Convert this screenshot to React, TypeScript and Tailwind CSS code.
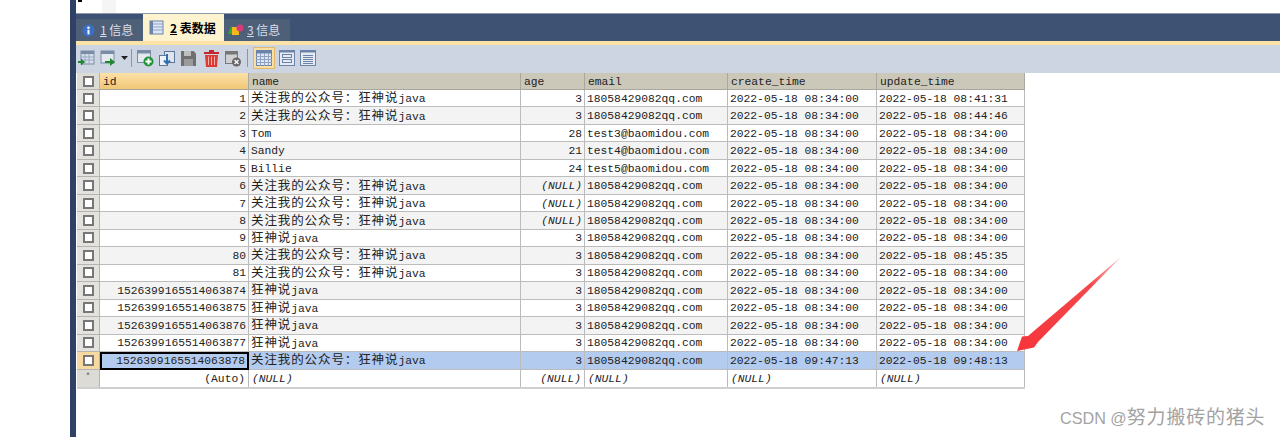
const dt = '18058429082qq.com';
const t0 = '2022-05-18 08:34:00';
const gz = '关注我的公众号：狂神说java';
const ks = '狂神说java';

const rows = [
  ['1', gz, '3', dt, t0, '2022-05-18 08:41:31'],
  ['2', gz, '3', dt, t0, '2022-05-18 08:44:46'],
  ['3', 'Tom', '28', 'test3@baomidou.com', t0, t0],
  ['4', 'Sandy', '21', 'test4@baomidou.com', t0, t0],
  ['5', 'Billie', '24', 'test5@baomidou.com', t0, t0],
  ['6', gz, '(NULL)', dt, t0, t0],
  ['7', gz, '(NULL)', dt, t0, t0],
  ['8', gz, '(NULL)', dt, t0, t0],
  ['9', ks, '3', dt, t0, t0],
  ['80', gz, '3', dt, t0, '2022-05-18 08:45:35'],
  ['81', gz, '3', dt, t0, t0],
  ['1526399165514063874', ks, '3', dt, t0, t0],
  ['1526399165514063875', ks, '3', dt, t0, t0],
  ['1526399165514063876', ks, '3', dt, t0, t0],
  ['1526399165514063877', ks, '3', dt, t0, t0],
  ['1526399165514063878', gz, '3', dt, '2022-05-18 09:47:13', '2022-05-18 09:48:13'],
];

const widths = ['w-[149px]', 'w-[272px]', 'w-[64px]', 'w-[143px]', 'w-[149px]', 'w-[148px]'];
const headers = ['id', 'name', 'age', 'email', 'create_time', 'update_time'];

// CJK runs are set a little larger than the mono text, as in the grid's fallback font
function CellText({ text }: { text: string }) {
  const parts = text.split(/([^\x00-\x7f]+)/);
  return (
    <span className="leading-[13px]">
      {parts.map((p, i) =>
        /[^\x00-\x7f]/.test(p) ? (
          <span key={i} className="text-[12.5px] leading-[13px] tracking-[0.9px] font-['Noto_Sans_CJK_SC',sans-serif]">{p}</span>
        ) : (
          <span key={i}>{p}</span>
        )
      )}
    </span>
  );
}

function RowHead({ selected }: { selected?: boolean }) {
  return (
    <div className={`w-[23px] shrink-0 flex items-center justify-center border-r border-b border-[#b4b4b0] ${selected ? 'bg-[#f6d9a0]' : 'bg-[#e3e2de]'}`}>
      <div className="w-[11px] h-[11px] bg-white border-2 border-[#777]" />
    </div>
  );
}

function Row({ cells, index }: { cells: string[]; index: number }) {
  const selected = index === 15;
  const bg = selected ? 'bg-[#b3cbee]' : index % 2 === 1 ? 'bg-[#f3f3f3]' : 'bg-white';
  return (
    <div className="flex h-[17.47px]">
      <RowHead selected={selected} />
      {cells.map((c, i) => {
        const right = i === 0 || i === 2;
        const isNull = c === '(NULL)';
        const cursor = selected && i === 0;
        const hasCjk = /[^\x00-\x7f]/.test(c);
        return (
          <div
            key={i}
            className={`${widths[i]} shrink-0 whitespace-nowrap flex items-center px-[2px] ${hasCjk ? 'pt-0' : 'pt-[2px]'} ${bg} ${right ? 'justify-end' : ''} ${isNull ? 'italic' : ''} ${cursor ? 'border-2 border-black' : 'border-r border-b border-[#bcbcbc]'}`}
          >
            <CellText text={c} />
          </div>
        );
      })}
    </div>
  );
}

function TableIcon({ active }: { active?: boolean }) {
  return (
    <svg width="17" height="17" viewBox="0 0 17 17">
      <rect x="1" y="2" width="13" height="13" fill={active ? '#dce6f4' : '#e8edf5'} stroke="#6b83a8" />
      <rect x="1" y="2" width="3" height="13" fill="#6b83a8" />
      {[5, 8, 11].map((y) => <line key={y} x1="4" x2="14" y1={y} y2={y} stroke="#8fa3c2" />)}
    </svg>
  );
}

function Toolbar() {
  return (
    <div className="h-[28px] bg-[#cdd5e3] flex items-center pl-[1px] pb-[2px]">
      {/* import */}
      <svg width="18" height="18" viewBox="0 0 18 18">
        <rect x="4" y="2" width="13" height="13" fill="#d5dde9" stroke="#7a8ba5" />
        <rect x="4" y="2" width="13" height="3" fill="#7a8ba5" />
        {[8, 11].map((y) => <line key={y} x1="4" x2="17" y1={y} y2={y} stroke="#9aaac2" />)}
        {[8, 12].map((x) => <line key={x} x1={x} x2={x} y1="5" y2="15" stroke="#9aaac2" />)}
        <path d="M1 12h3V9.500l4 3.500-4 3.500V14H1z" fill="#1f8a2c" />
      </svg>
      {/* export */}
      <svg width="20" height="18" viewBox="0 0 20 18" className="ml-[5px]">
        <rect x="1" y="2" width="13" height="12" fill="#e4e8ef" stroke="#7a8ba5" />
        <rect x="1" y="2" width="13" height="3" fill="#7a8ba5" />
        <path d="M5 12h5V9l5 4-5 4v-3H5z" fill="#1f8a2c" />
      </svg>
      <svg width="7" height="4" viewBox="0 0 7 4" className="ml-[1px]"><path d="M0 0h7L3.500 4z" fill="#222" /></svg>
      <div className="w-px h-[18px] bg-[#8d94a3] ml-[3px] mr-[5px]" />
      {/* add row */}
      <svg width="17" height="18" viewBox="0 0 17 18">
        <rect x="0.500" y="1.500" width="13" height="12" fill="#e4e8ef" stroke="#7a8ba5" />
        <rect x="0.500" y="1.500" width="13" height="3" fill="#7a8ba5" />
        <circle cx="11.500" cy="12.500" r="5" fill="#22923a" />
        <path d="M8.500 12.500h6M11.500 9.500v6" stroke="#fff" strokeWidth="2" />
      </svg>
      {/* duplicate */}
      <svg width="17" height="17" viewBox="0 0 17 17" className="ml-[4px]">
        <rect x="6.500" y="1.500" width="10" height="11" fill="#dfe5ee" stroke="#5e7698" />
        <rect x="1.500" y="5.500" width="8" height="10" fill="#eef1f6" stroke="#5e7698" />
        <path d="M9 4v9M6 10.500l3 3 3-3" fill="none" stroke="#2f6fb0" strokeWidth="2" />
      </svg>
      {/* save */}
      <svg width="15" height="15" viewBox="0 0 15 15" className="ml-[6px]">
        <path d="M0 0h12.500L15 2.500V15H0z" fill="#6f6f6f" />
        <rect x="3" y="0" width="7" height="5" fill="#bdbdbd" />
        <rect x="3" y="8" width="9" height="7" fill="#9a9a9a" />
      </svg>
      {/* delete */}
      <svg width="15" height="18" viewBox="0 0 15 18" className="ml-[8px]">
        <path d="M5 1h5v2h5v2H0V3h5z" fill="#c0282b" />
        <path d="M1 6h13l-1 12H2z" fill="#dc3a35" />
        <path d="M4.500 7.500v8.500M7.500 7.500v8.500M10.500 7.500v8.500" stroke="#f4b0a8" />
      </svg>
      {/* discard */}
      <svg width="17" height="17" viewBox="0 0 17 17" className="ml-[6px]">
        <rect x="0.500" y="1.500" width="12" height="12" fill="#cfd0d2" stroke="#777" />
        <rect x="0.500" y="1.500" width="12" height="3" fill="#777" />
        <circle cx="11.500" cy="12" r="4.500" fill="#666" />
        <path d="M9.500 10l4 4M13.500 10l-4 4" stroke="#fff" strokeWidth="1.300" />
      </svg>
      <div className="w-px h-[18px] bg-[#8d94a3] ml-[5px] mr-[5px]" />
      {/* view modes */}
      <div className="w-[22px] h-[22px] bg-[#f8dfa6] border border-[#e2b868] flex items-center justify-center">
        <svg width="16" height="16" viewBox="0 0 16 16">
          <rect x="0.500" y="0.500" width="15" height="15" fill="#dfe6f2" stroke="#6b83a8" />
          <rect x="0.500" y="0.500" width="15" height="3" fill="#6b83a8" />
          {[6, 9, 12].map((y) => <line key={y} x1="0" x2="16" y1={y + 0.5} y2={y + 0.5} stroke="#8fa3c2" />)}
          {[4, 8, 12].map((x) => <line key={x} x1={x + 0.5} x2={x + 0.5} y1="3" y2="16" stroke="#8fa3c2" />)}
        </svg>
      </div>
      <svg width="16" height="16" viewBox="0 0 16 16" className="ml-[4px]">
        <rect x="0.500" y="0.500" width="15" height="15" fill="#e6ebf3" stroke="#6b83a8" />
        <rect x="0.500" y="0.500" width="15" height="2" fill="#6b83a8" />
        <rect x="3.500" y="4.500" width="9" height="3" fill="none" stroke="#6b83a8" />
        <rect x="3.500" y="9.500" width="9" height="3" fill="none" stroke="#6b83a8" />
      </svg>
      <svg width="16" height="16" viewBox="0 0 16 16" className="ml-[5px]">
        <rect x="0.500" y="0.500" width="15" height="15" fill="#e6ebf3" stroke="#6b83a8" />
        <rect x="0.500" y="0.500" width="15" height="2" fill="#6b83a8" />
        {[5, 7, 9, 11, 13].map((y) => <line key={y} x1="3" x2="13" y1={y + 0.5} y2={y + 0.5} stroke="#6b83a8" />)}
      </svg>
    </div>
  );
}

function Tabs() {
  return (
    <div className="h-[27px] bg-[#3e5273] flex items-end font-['Noto_Sans_CJK_SC',sans-serif] text-[12px]">
      <div className="w-[67px] h-[22px] bg-[#4e6078] flex items-center pl-[6px] gap-[5px] text-[#d8dee8]">
        <svg width="13" height="13" viewBox="0 0 13 13">
          <circle cx="6.500" cy="6.500" r="6" fill="#3c6fc4" />
          <circle cx="6.500" cy="3.800" r="1.300" fill="#fff" />
          <rect x="5.500" y="5.800" width="2" height="4.500" fill="#fff" />
        </svg>
        <span><span className="underline">1</span> 信息</span>
      </div>
      <div className="w-[81px] h-[27px] bg-[#fdf3cf] flex items-center pl-[6px] gap-[4px] text-black font-bold">
        <TableIcon active />
        <span><span className="underline">2</span> 表数据</span>
      </div>
      <div className="w-[66px] h-[22px] bg-[#4e6078] flex items-center pl-[4px] gap-[3px] text-[#d8dee8]">
        <svg width="16" height="13" viewBox="0 0 16 13">
          <path d="M0 10L3 2l3 8z" fill="#3aa53a" />
          <rect x="4" y="3" width="7" height="8" fill="#f5b81f" />
          <circle cx="12" cy="4" r="3.500" fill="#d93a7a" />
        </svg>
        <span><span className="underline">3</span> 信息</span>
      </div>
    </div>
  );
}

export default function App() {
  return (
    <div className="relative w-[1280px] h-[437px] overflow-hidden bg-white flex font-['Liberation_Mono',monospace] text-[11.3px] text-[#222]">
      <div className="w-[70px] shrink-0 bg-white" />
      <div className="w-[6px] shrink-0 bg-[#2f4266]" />
      <div className="flex-1 flex flex-col">
        <div className="h-[14px] bg-white border-b border-[#8c97a8] flex items-start">
          <div className="w-[4px] h-[2px] ml-[2px] bg-black" />
          <div className="w-[14px] h-[13px] ml-[20px] bg-[#f5f5f5]" />
        </div>
        <Tabs />
        <div className="h-[4px] bg-[#fbe3a8]" />
        <Toolbar />
        <div className="pl-[1px]">
          {/* column headers */}
          <div className="flex h-[17px]">
            <div className="w-[23px] shrink-0 flex items-center justify-center bg-[#dcdbd5] border-r border-b border-[#b4b4b0]">
              <div className="w-[11px] h-[11px] bg-white border-2 border-[#777]" />
            </div>
            {headers.map((h, i) => (
              <div
                key={h}
                className={`${widths[i]} shrink-0 flex items-center px-[3px] pt-[2px] border-r border-b border-[#a8a8a0] ${i === 0 ? 'bg-linear-to-b from-[#fbe2a8] to-[#f1c676]' : 'bg-[#cbc8ba]'}`}
              >
                {h}
              </div>
            ))}
          </div>
          {rows.map((r, i) => <Row key={i} cells={r} index={i} />)}
          {/* new row */}
          <div className="flex w-fit h-[17.47px] border-b-2 border-[#cfcfcf] box-content">
            <div className="w-[23px] shrink-0 flex items-center justify-center bg-[#dcdbd5] border-r border-[#b4b4b0] text-[9px] text-[#666]">*</div>
            {['(Auto)', '(NULL)', '(NULL)', '(NULL)', '(NULL)', '(NULL)'].map((c, i) => (
              <div
                key={i}
                className={`${widths[i]} shrink-0 flex items-center px-[3px] pt-[2px] bg-white border-r border-[#bcbcbc] ${i === 0 || i === 2 ? 'justify-end' : ''} ${i === 0 ? '' : 'italic'}`}
              >
                {c}
              </div>
            ))}
          </div>
        </div>
      </div>

      {/* red annotation arrow */}
      <svg width="1280" height="437" viewBox="0 0 1280 437" className="absolute left-0 top-0 pointer-events-none">
        <defs>
          <linearGradient id="arrowFade" x1="1017" y1="351" x2="1122" y2="256" gradientUnits="userSpaceOnUse">
            <stop offset="0" stopColor="#f5353b" />
            <stop offset="0.7" stopColor="#f5474a" />
            <stop offset="1" stopColor="#fbd0d0" />
          </linearGradient>
        </defs>
        <path d="M1017 351L1022 336.500L1028 336L1122 256L1038 342L1034 347.500Z" fill="url(#arrowFade)" />
      </svg>

      {/* watermark */}
      <div className="absolute left-[1060px] top-[408px] text-[16.2px] leading-[20px] text-[#a3a3a3] whitespace-nowrap font-['Liberation_Sans','Noto_Sans_CJK_SC',sans-serif]">
        CSDN @<span className="text-[19px] tracking-[0.8px]">努力搬砖的猪头</span>
      </div>
    </div>
  );
}
